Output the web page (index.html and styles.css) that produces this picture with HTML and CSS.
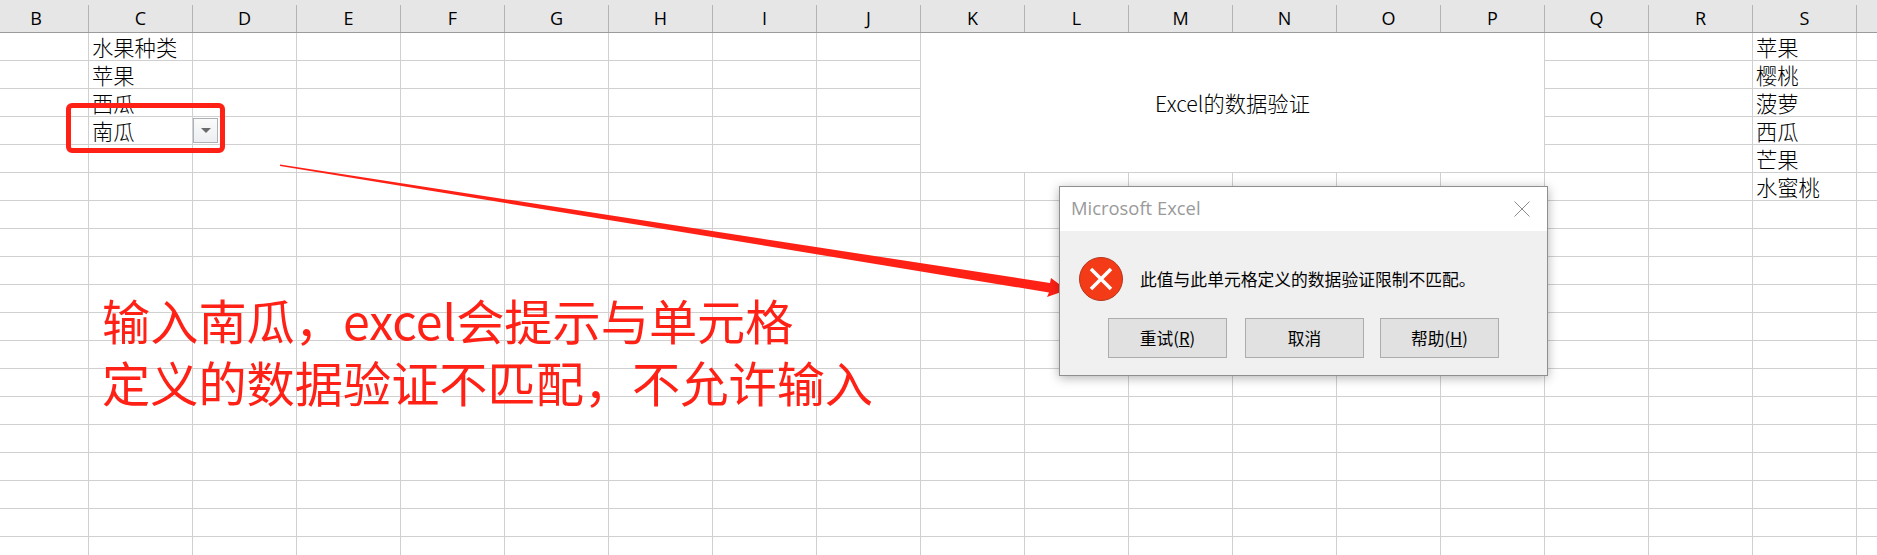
FILE: index.html
```html
<!DOCTYPE html>
<html lang="en">
<head>
    <meta charset="UTF-8">
    <title>Excel 数据验证</title>
    <link rel="stylesheet" href="styles.css">
</head>
<body>

<div class="header">
    <div class="col first">B</div>
    <div class="col">C</div>
    <div class="col">D</div>
    <div class="col">E</div>
    <div class="col">F</div>
    <div class="col">G</div>
    <div class="col">H</div>
    <div class="col">I</div>
    <div class="col">J</div>
    <div class="col">K</div>
    <div class="col">L</div>
    <div class="col">M</div>
    <div class="col">N</div>
    <div class="col">O</div>
    <div class="col">P</div>
    <div class="col">Q</div>
    <div class="col">R</div>
    <div class="col">S</div>
    <div class="col"></div>
</div>

<div class="sheet">
    <div class="cell c-col r1">水果种类</div>
    <div class="cell c-col r2">苹果</div>
    <div class="cell c-col r3">西瓜</div>
    <div class="cell c-col r4">南瓜</div>
    <div class="dropdown"><span class="dropdown-arrow"></span></div>

    <div class="merged">Excel的数据验证</div>

    <div class="cell s-col r1">苹果</div>
    <div class="cell s-col r2">樱桃</div>
    <div class="cell s-col r3">菠萝</div>
    <div class="cell s-col r4">西瓜</div>
    <div class="cell s-col r5">芒果</div>
    <div class="cell s-col r6">水蜜桃</div>
</div>

<!-- annotations drawn over the sheet -->
<div class="red-box"></div>

<svg class="arrow" width="1877" height="555" viewBox="0 0 1877 555">
    <polygon points="280,164.500 1050,283 1051,278 1067,290 1047,297 1049,292.500 280,166" fill="#ff2116"/>
</svg>

<div class="note">
    <div>输入南瓜，excel会提示与单元格</div>
    <div>定义的数据验证不匹配，不允许输入</div>
</div>

<div class="dialog">
    <div class="dialog-title">
        <span class="dialog-name">Microsoft Excel</span>
        <svg class="dialog-close" width="16" height="16" viewBox="0 0 16 16">
            <path d="M.5.5l15 15M15.500.5l-15 15" stroke="#8c8c8c" stroke-width="1" fill="none"/>
        </svg>
    </div>
    <div class="dialog-body">
        <div class="dialog-message">
            <svg class="error-icon" width="44" height="44" viewBox="0 0 44 44">
                <circle cx="22" cy="22" r="21.500" fill="#f33c17" stroke="#b5351c" stroke-width="1"/>
                <path d="M12 12l20 20M32 12l-20 20" stroke="#fff" stroke-width="3.500" fill="none"/>
            </svg>
            <span>此值与此单元格定义的数据验证限制不匹配。</span>
        </div>
        <div class="dialog-buttons">
            <button class="btn">重试(<u>R</u>)</button>
            <button class="btn">取消</button>
            <button class="btn">帮助(<u>H</u>)</button>
        </div>
    </div>
</div>

</body>
</html>
```

FILE: styles.css
```css
body {
    margin: 0;
    width: 1877px;
    height: 555px;
    overflow: hidden;
    position: relative;
    background: #fff;
    font-family: "Liberation Sans", "Noto Sans CJK SC", sans-serif;
    color: #000;
}

.header {
    display: grid;
    grid-template-columns: 88px repeat(17, 104px) 21px;
    height: 33px;
    box-sizing: border-box;
    background: #e6e6e6;
    border-bottom: 1px solid #9b9b9b;
}

.col {
    margin-top: 5px;
    box-sizing: border-box;
    border-left: 1px solid #b4b4b4;
    font-family: "Open Sans", sans-serif;
    font-size: 18px;
    line-height: 26px;
    text-align: center;
}

.col.first {
    border-left: none;
    text-align: right;
    padding-right: 46px;
}

.sheet {
    display: grid;
    grid-template-columns: 88px repeat(17, 104px) 21px;
    grid-auto-rows: 28px;
    height: 522px;
    background-image:
        linear-gradient(to right, #d0d0d0 1px, transparent 1px),
        linear-gradient(to bottom, transparent 27px, #d0d0d0 27px);
    background-size: 104px 100%, 100% 28px;
    background-position: 88px 0, 0 0;
}

.cell {
    padding-left: 4px;
    font-family: "Noto Sans CJK SC", sans-serif;
    font-weight: 300;
    font-size: 21.3px;
    line-height: 28px;
    white-space: nowrap;
}

.c-col { grid-column: 2; }
.s-col { grid-column: 18; }
.r1 { grid-row: 1; }
.r2 { grid-row: 2; }
.r3 { grid-row: 3; }
.r4 { grid-row: 4; }
.r5 { grid-row: 5; }
.r6 { grid-row: 6; }

.dropdown {
    grid-column: 3;
    grid-row: 4;
    width: 25px;
    height: 25px;
    margin: 1px 0 0 1px;
    box-sizing: border-box;
    border: 1px solid #adb2b8;
    background: linear-gradient(#fbfbfb, #eceef1);
    display: flex;
    align-items: center;
    justify-content: center;
}

.dropdown-arrow {
    width: 0;
    height: 0;
    border-left: 5px solid transparent;
    border-right: 5px solid transparent;
    border-top: 5px solid #6a6a6a;
}

.merged {
    grid-column: 10 / 16;
    grid-row: 1 / 6;
    margin-left: 1px;
    margin-bottom: 1px;
    background: #fff;
    display: flex;
    align-items: center;
    justify-content: center;
    font-family: "Noto Sans CJK SC", sans-serif;
    font-weight: 300;
    font-size: 21.3px;
}

.red-box {
    position: absolute;
    left: 66px;
    top: 103px;
    width: 159px;
    height: 50px;
    box-sizing: border-box;
    border: 5px solid #ff2116;
    border-radius: 6px;
}

.arrow {
    position: absolute;
    left: 0;
    top: 0;
}

.note {
    position: absolute;
    left: 102px;
    top: 288px;
    font-family: "Noto Sans CJK SC", sans-serif;
    font-size: 48.2px;
    line-height: 62px;
    color: #ff2116;
    white-space: nowrap;
}

.dialog {
    position: absolute;
    left: 1059px;
    top: 186px;
    width: 489px;
    height: 190px;
    box-sizing: border-box;
    border: 1px solid #8f8f8f;
    background: #f0f0f0;
    box-shadow: 0 2px 10px rgba(0, 0, 0, 0.3);
    display: flex;
    flex-direction: column;
}

.dialog-title {
    height: 44px;
    background: #fff;
    display: flex;
    align-items: center;
    justify-content: space-between;
    padding: 0 17px 0 11px;
    font-family: "Open Sans", sans-serif;
    font-size: 18.4px;
    color: #9a9a9a;
}

.dialog-name {
    margin-bottom: 4px;
}

.dialog-body {
    flex: 1;
    padding: 26px 48px 0 19px;
}

.dialog-message {
    display: flex;
    align-items: center;
    gap: 17px;
    font-family: "Noto Sans CJK SC", sans-serif;
    font-size: 16.8px;
    color: #000;
}

.dialog-buttons {
    display: flex;
    justify-content: flex-end;
    gap: 16px;
    margin-top: 17px;
}

.btn {
    width: 119px;
    height: 40px;
    padding: 0;
    border: 1px solid #adadad;
    background: #e1e1e1;
    font-family: "Noto Sans CJK SC", sans-serif;
    font-size: 16.7px;
    color: #000;
}

.btn:first-child {
    margin-right: 2px;
}
```
